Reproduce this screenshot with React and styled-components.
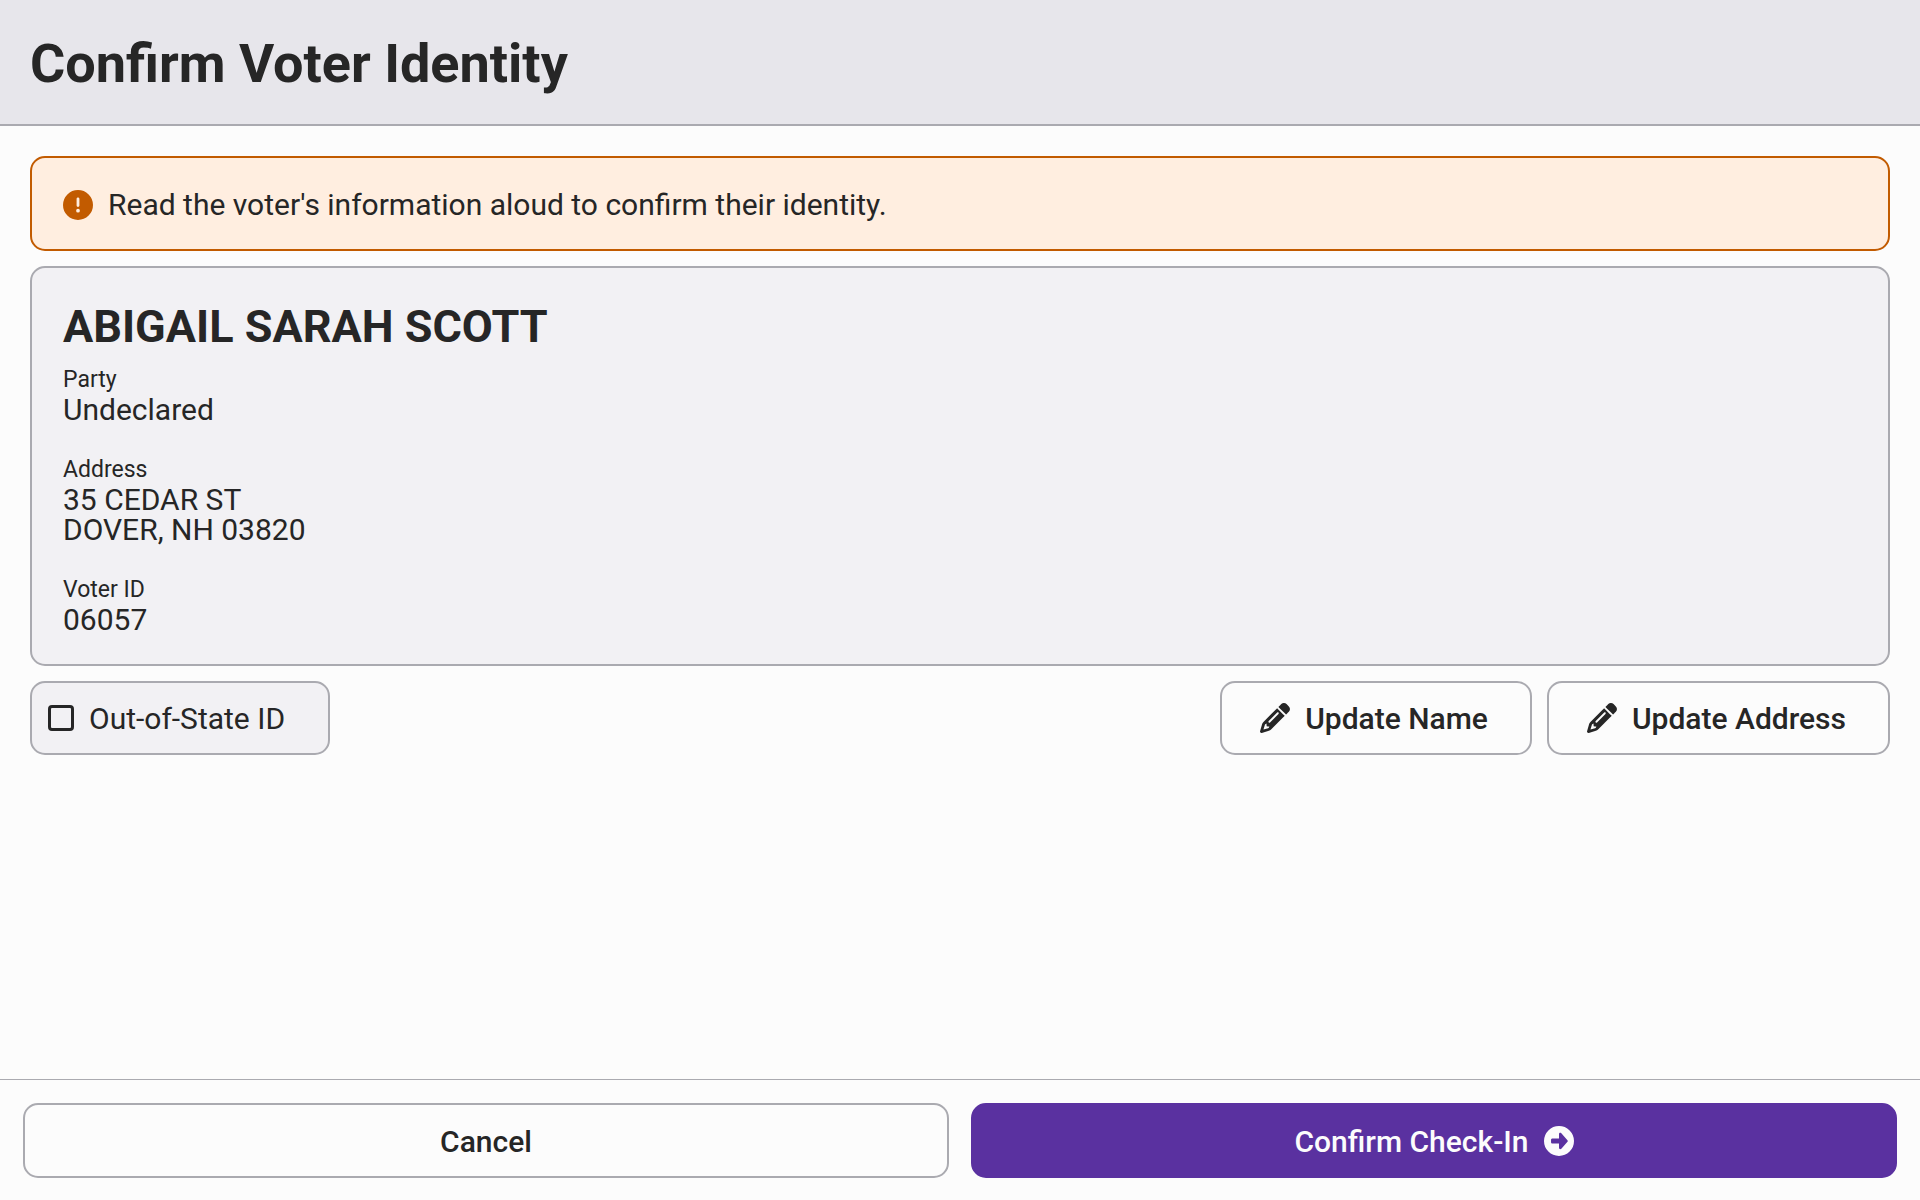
import React, { useState } from 'react';
import styled, { createGlobalStyle } from 'styled-components';
import { FaCircleExclamation, FaPencil } from 'react-icons/fa6';

const GlobalStyle = createGlobalStyle`
  *, *::before, *::after {
    box-sizing: border-box;
  }

  body {
    margin: 0;
    background: #fcfcfc;
    color: #262626;
    font-family: Roboto, "Liberation Sans", sans-serif;
    font-size: 30px;
    line-height: 30px;
  }
`;

const Screen = styled.div`
  display: flex;
  flex-direction: column;
  min-height: 100vh;
`;

const Header = styled.header`
  padding: 32px 30px 28px;
  background: #e7e6eb;
  border-bottom: 2px solid #aaaab0;
`;

const Title = styled.h1`
  margin: 0;
  font-size: 54px;
  font-weight: 700;
  line-height: 64px;
`;

const Content = styled.main`
  display: flex;
  flex: 1;
  flex-direction: column;
  gap: 15px;
  padding: 30px;
`;

const Panel = styled.section`
  padding: 31px 31px 29px;
  border: 2px solid #aaaab0;
  border-radius: 15px;
  background: #f2f1f4;
`;

const Callout = styled(Panel)`
  display: flex;
  align-items: center;
  gap: 15px;
  border-color: #c25b00;
  background: #ffeee0;
  line-height: 31px;

  svg {
    flex: none;
    color: #c25b00;
  }
`;

const VoterName = styled.h2`
  margin: 0 0 10px;
  font-size: 45px;
  font-weight: 700;
  line-height: 56px;
`;

const Details = styled.dl`
  display: flex;
  flex-direction: column;
  gap: 30px;
  margin: 0;
`;

const Term = styled.dt`
  font-size: 23px;
`;

const Value = styled.dd`
  margin: 0;
`;

const Actions = styled.div`
  display: flex;
  justify-content: space-between;
  gap: 15px;
`;

const ButtonGroup = styled.div`
  display: flex;
  gap: 15px;
`;

const Button = styled.button`
  display: flex;
  align-items: center;
  justify-content: center;
  gap: 15px;
  min-height: 74px;
  padding: 0 42px 0 38px;
  border: 2px solid ${({ $primary }) => ($primary ? '#5a31a0' : '#aaaab0')};
  border-radius: 15px;
  background: ${({ $primary }) => ($primary ? '#5a31a0' : '#fcfcfc')};
  color: ${({ $primary }) => ($primary ? '#fcfcfc' : '#262626')};
  font: inherit;
  font-weight: 500;
  cursor: pointer;
`;

const ControlText = styled.span`
  padding-top: 2px;
`;

const CheckLabel = styled.label`
  display: flex;
  align-items: center;
  gap: 15px;
  min-height: 74px;
  padding: 0 43px 0 16px;
  border: 2px solid #aaaab0;
  border-radius: 15px;
  background: #f2f1f4;
  cursor: pointer;
`;

const CheckBox = styled.input`
  appearance: none;
  width: 26px;
  height: 26px;
  margin: 0;
  border: 3px solid #262626;
  border-radius: 4px;

  &:checked {
    background: #5a31a0;
    border-color: #5a31a0;
  }
`;

const Footer = styled.footer`
  display: grid;
  grid-template-columns: 1fr 1fr;
  gap: 22px;
  padding: 23px 23px 22px;
  border-top: 1px solid #aaaab0;

  ${Button} {
    min-height: 75px;
    padding: 0 40px;
  }
`;

function CircleRightIcon() {
  return (
    <svg width="30" height="30" viewBox="0 0 512 512" fill="currentColor" aria-hidden="true">
      <path
        fillRule="evenodd"
        d="M256 0a256 256 0 1 1 0 512a256 256 0 1 1 0-512z
          M144 212h112v-72c0-22 24-30 40-15l101 112c11 11 11 27 0 38l-101 112c-16 15-40 7-40-15v-72h-112c-13 0-24-11-24-24v-40c0-13 11-24 24-24z"
      />
    </svg>
  );
}

export default function App() {
  const [outOfState, setOutOfState] = useState(false);

  return (
    <>
      <GlobalStyle />
      <Screen>
        <Header>
          <Title>Confirm Voter Identity</Title>
        </Header>
        <Content>
          <Callout>
            <FaCircleExclamation size={30} aria-hidden="true" />
            <span>Read the voter's information aloud to confirm their identity.</span>
          </Callout>
          <Panel>
            <VoterName>ABIGAIL SARAH SCOTT</VoterName>
            <Details>
              <div>
                <Term>Party</Term>
                <Value>Undeclared</Value>
              </div>
              <div>
                <Term>Address</Term>
                <Value>
                  35 CEDAR ST
                  <br />
                  DOVER, NH 03820
                </Value>
              </div>
              <div>
                <Term>Voter ID</Term>
                <Value>06057</Value>
              </div>
            </Details>
          </Panel>
          <Actions>
            <CheckLabel htmlFor="out-of-state">
              <CheckBox
                id="out-of-state"
                type="checkbox"
                checked={outOfState}
                onChange={(event) => setOutOfState(event.target.checked)}
              />
              <ControlText>Out-of-State ID</ControlText>
            </CheckLabel>
            <ButtonGroup>
              <Button type="button">
                <FaPencil size={30} aria-hidden="true" />
                <ControlText>Update Name</ControlText>
              </Button>
              <Button type="button">
                <FaPencil size={30} aria-hidden="true" />
                <ControlText>Update Address</ControlText>
              </Button>
            </ButtonGroup>
          </Actions>
        </Content>
        <Footer>
          <Button type="button">
            <ControlText>Cancel</ControlText>
          </Button>
          <Button type="button" $primary>
            <ControlText>Confirm Check-In</ControlText>
            <CircleRightIcon />
          </Button>
        </Footer>
      </Screen>
    </>
  );
}
